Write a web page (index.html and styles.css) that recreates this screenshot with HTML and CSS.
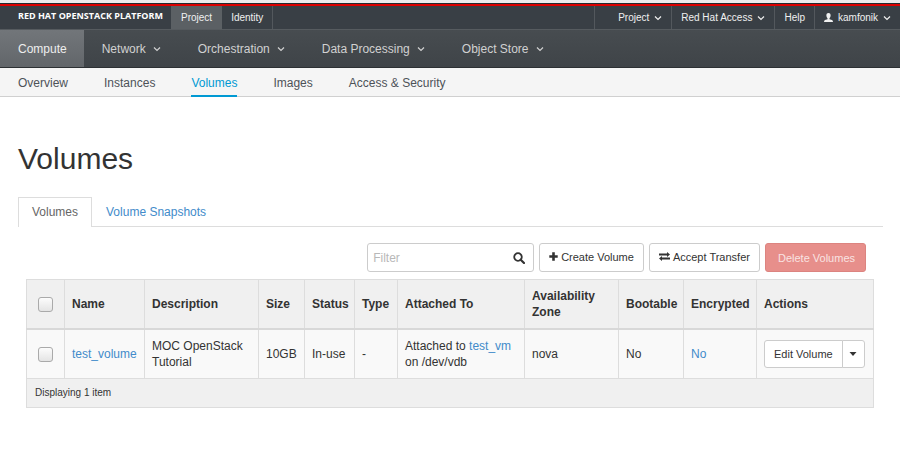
FILE: index.html
```html
<!DOCTYPE html>
<html lang="en">
<head>
<meta charset="utf-8">
<title>Volumes</title>
<link rel="stylesheet" href="styles.css">
</head>
<body>
<svg class="defs" aria-hidden="true">
  <symbol id="chevron" viewBox="0 0 8 8"><path d="M1 2.500 4 5.500 7 2.500" fill="none" stroke="currentColor" stroke-width="1.200"/></symbol>
</svg>
<header>
  <div class="topbar">
    <a class="brand" href="#">RED HAT OPENSTACK PLATFORM</a>
    <nav class="top-links" aria-label="Dashboards">
      <a class="active" href="#">Project</a>
      <a href="#">Identity</a>
    </nav>
    <nav class="user-links" aria-label="Account">
      <a class="project" href="#">Project <svg class="chevron"><use href="#chevron"/></svg></a>
      <a href="#">Red Hat Access <svg class="chevron"><use href="#chevron"/></svg></a>
      <a href="#">Help</a>
      <a class="user" href="#"><svg class="person" viewBox="0 0 9 9"><path d="M4.500 0C6.100 0 6.800 1.100 6.600 2.800 6.500 4 6 4.800 5.500 5.300V6.200L8 7.100Q9 7.500 9 9H0Q0 7.500 1 7.100L3.500 6.200V5.300C3 4.800 2.500 4 2.400 2.800 2.200 1.100 2.900 0 4.500 0Z" fill="currentColor"/></svg>kamfonik <svg class="chevron"><use href="#chevron"/></svg></a>
    </nav>
  </div>
  <nav class="mainnav" aria-label="Main">
    <a class="active" href="#">Compute</a>
    <a href="#">Network <svg class="chevron"><use href="#chevron"/></svg></a>
    <a href="#">Orchestration <svg class="chevron"><use href="#chevron"/></svg></a>
    <a href="#">Data Processing <svg class="chevron"><use href="#chevron"/></svg></a>
    <a href="#">Object Store <svg class="chevron"><use href="#chevron"/></svg></a>
  </nav>
  <nav class="subnav" aria-label="Compute">
    <a href="#">Overview</a>
    <a href="#">Instances</a>
    <a class="active" href="#">Volumes</a>
    <a href="#">Images</a>
    <a href="#">Access &amp; Security</a>
  </nav>
</header>
<main>
  <h1>Volumes</h1>
  <nav class="tabs" aria-label="Volume views">
    <a class="active" href="#">Volumes</a>
    <a href="#">Volume Snapshots</a>
  </nav>
  <section class="panel">
    <div class="toolbar">
      <div class="search">
        <input type="text" placeholder="Filter" aria-label="Filter">
        <svg viewBox="0 0 12 12"><circle cx="5" cy="5" r="3.800" fill="none" stroke="currentColor" stroke-width="1.800"/><path d="M7.700 7.700 11 11" stroke="currentColor" stroke-width="2.200" stroke-linecap="round"/></svg>
      </div>
      <button class="btn" type="button"><svg class="plus" viewBox="0 0 9 9"><path d="M3.200 .3h2.600v2.900h2.900v2.600H5.800v2.900H3.200V5.800H.3V3.200h2.900z" fill="currentColor"/></svg>Create Volume</button>
      <button class="btn" type="button"><svg class="swap" viewBox="0 0 11 9"><path d="M0 1.600H8V0L11 2.500 8 5V3.400H0zM11 5.600H3V4L0 6.500 3 9V7.400H11z" fill="currentColor"/></svg>Accept Transfer</button>
      <button class="btn danger" type="button">Delete Volumes</button>
    </div>
    <table>
      <colgroup>
        <col class="c-check"><col class="c-name"><col class="c-desc"><col class="c-size"><col class="c-status"><col class="c-type"><col class="c-attached"><col class="c-zone"><col class="c-boot"><col class="c-enc"><col class="c-actions">
      </colgroup>
      <thead>
        <tr>
          <th class="check"><input type="checkbox" aria-label="Select all"></th>
          <th>Name</th><th>Description</th><th>Size</th><th>Status</th><th>Type</th><th>Attached To</th><th>Availability Zone</th><th>Bootable</th><th>Encrypted</th><th>Actions</th>
        </tr>
      </thead>
      <tbody>
        <tr>
          <td class="check"><input type="checkbox" aria-label="Select test_volume"></td>
          <td><a href="#">test_volume</a></td>
          <td>MOC OpenStack Tutorial</td>
          <td>10GB</td>
          <td>In-use</td>
          <td>-</td>
          <td>Attached to <a href="#">test_vm</a> on /dev/vdb</td>
          <td>nova</td>
          <td>No</td>
          <td><a href="#">No</a></td>
          <td><div class="group"><button class="edit" type="button">Edit Volume</button><button class="more" type="button" aria-label="More actions"><svg viewBox="0 0 8 4"><path d="M.5 0h7L4 4z" fill="currentColor"/></svg></button></div></td>
        </tr>
      </tbody>
      <tfoot>
        <tr><td colspan="11">Displaying 1 item</td></tr>
      </tfoot>
    </table>
  </section>
</main>
</body>
</html>
```
FILE: styles.css
```css
* { box-sizing: border-box; }
body {
  margin: 0;
  background: #fff;
  color: #333;
  font: 12px/16px "Liberation Sans", Arial, sans-serif;
}
a { color: #428bca; text-decoration: none; }
button, input { font-family: inherit; }
.defs { display: none; }
.chevron { width: 8px; height: 8px; flex: none; }

header { border-top: 3px solid #ececec; }
.topbar {
  display: flex;
  height: 26px;
  background: #393f45;
  border-top: 1px solid #222b2f;
  box-shadow: inset 0 2px #dc0000;
  padding-top: 2px;
  font-size: 10px;
}
.topbar a { color: #f0f0f0; display: flex; align-items: center; }
.topbar .brand {
  width: 171px;
  padding: 0 0 3px 18px;
  color: #fff;
  font: bold 9px/12px "Open Sans", sans-serif;
}
.top-links, .user-links { display: flex; }
.top-links a { padding: 0 9px; border-right: 1px solid #53585d; }
.top-links .active { background: #5b6064; padding: 0 10px; border-right: 0; }
.user-links { margin-left: auto; }
.user-links a { gap: 5px; padding: 0 9px; border-left: 1px solid #53585d; }
.user-links .project { padding-left: 23px; }
.user-links .person { width: 9px; height: 9px; }

.mainnav {
  display: flex;
  height: 39px;
  background: linear-gradient(#474c50, #3f4448);
  border-top: 1px solid #565b5f;
  border-bottom: 1px solid #2c3033;
}
.mainnav a { display: flex; align-items: center; gap: 7px; padding: 0 19px 0 18px; color: #d1d1d1; }
.mainnav .active { padding: 0 17px 0 18px; background: linear-gradient(#72767a, #62666a); color: #eee; }

.subnav {
  display: flex;
  gap: 36px;
  height: 29px;
  padding: 0 18px;
  background: #f5f5f5;
  border-bottom: 1px solid #d0d0d0;
}
.subnav a { height: 29px; line-height: 30px; color: #4d5258; border-bottom: 2px solid transparent; }
.subnav .active { color: #0099d3; border-color: #0099d3; }

main { padding: 44px 17px 0 18px; }
h1 { margin: 0 0 20px; font-size: 30px; line-height: 36px; font-weight: 400; }
.tabs { display: flex; border-bottom: 1px solid #ddd; }
.tabs a { padding: 6px 13px; border: 1px solid transparent; border-bottom: 0; }
.tabs .active { margin-bottom: -1px; background: #fff; border-color: #ddd; color: #666; }

.panel { padding: 16px 9px 0 8px; }
.toolbar { display: flex; justify-content: flex-end; gap: 5px; padding-right: 8px; margin-bottom: 7px; }
.search { position: relative; width: 167px; }
.search input {
  width: 100%;
  height: 29px;
  padding: 0 28px 0 5px;
  border: 1px solid #ccc;
  border-radius: 3px;
  font-size: 12px;
  background: #fff;
}
.search input::placeholder { color: #b8b8b8; opacity: 1; }
.search svg { position: absolute; right: 9px; top: 9px; width: 12px; height: 12px; }
.btn {
  display: flex;
  align-items: center;
  gap: 3px;
  height: 29px;
  padding: 0 9px 2px;
  border: 1px solid #ccc;
  border-radius: 3px;
  background: #fff;
  color: #333;
  font-size: 11px;
}
.btn.danger { padding: 0 10px 0 12px; background: #e78f8b; border-color: #dc8480; color: #f9e3e2; }
.plus { width: 9px; height: 9px; }
.swap { width: 11px; height: 9px; }

table { width: 100%; table-layout: fixed; border-collapse: collapse; border: 1px solid #ddd; }
th, td { padding: 7px; border: 1px solid #ddd; text-align: left; vertical-align: middle; }
thead th { height: 49px; background: #f0f0f0; border-bottom: 2px solid #d8d8d8; }
tbody td { height: 50px; background: #f9f9f9; }
tfoot td { height: 29px; padding: 6px 8px; background: #f0f0f0; font-size: 10px; }
.check { text-align: center; padding: 0; }
.check input {
  appearance: none;
  display: block;
  width: 15px;
  height: 15px;
  margin: 1px auto 0;
  border: 1px solid #aaa;
  border-radius: 3px;
  background: linear-gradient(#fcfcfc, #e4e4e4);
}
.c-check { width: 38px; }
.c-name { width: 80px; }
.c-desc { width: 114px; }
.c-size { width: 46px; }
.c-status { width: 50px; }
.c-type { width: 43px; }
.c-attached { width: 127px; }
.c-zone { width: 94px; }
.c-boot { width: 65px; }
.c-enc { width: 73px; }
.group { display: flex; margin: -2px 0; }
.group button { height: 28px; border: 1px solid #ccc; background: #fff; color: #333; font-size: 11px; }
.group .edit { padding: 0 9px; border-radius: 3px 0 0 3px; }
.group .more { display: flex; align-items: center; justify-content: center; width: 23px; margin-left: -1px; padding: 0; border-radius: 0 3px 3px 0; }
.more svg { width: 8px; height: 4px; }
```
